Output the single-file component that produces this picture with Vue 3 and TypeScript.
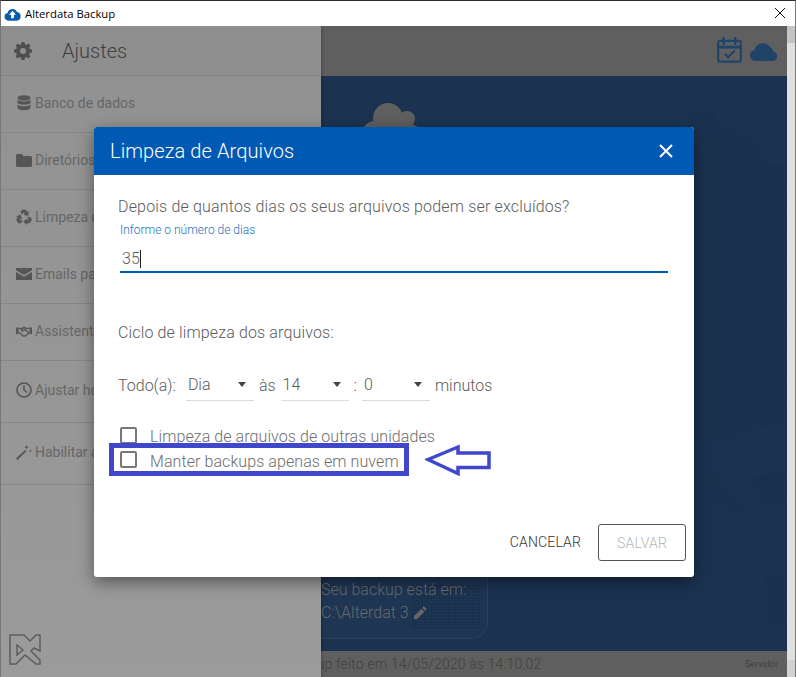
<script setup lang="ts">
const menu = [
  { label: 'Banco de dados', icon: 'db', cls: 'h57' },
  { label: 'Diretórios de backup', icon: 'folder', cls: 'h57' },
  { label: 'Limpeza de arquivos', icon: 'recycle', cls: 'h57' },
  { label: 'Emails para notificação', icon: 'mail', cls: 'h57' },
  { label: 'Assistente de instalação', icon: 'hands', cls: 'h57' },
  { label: 'Ajustar horário', icon: 'clock', cls: 'h62' },
  { label: 'Habilitar assistente', icon: 'wand', cls: 'h62' }
]

const selects = [
  { value: 'Dia' },
  { value: '14' },
  { value: '0' }
]
</script>

<template>
  <div class="window">
    <header class="titlebar">
      <svg class="app-icon" viewBox="0 0 24 20" width="17" height="14">
        <path fill="#0b5cad" d="M6 19.5a5.5 5.5 0 0 1-.9-10.900A7 7 0 0 1 18.400 7.200 6.200 6.200 0 0 1 18 19.500z" />
        <path fill="#fff" d="M12 5.500l5 5.500h-3v5h-4v-5H7z" />
      </svg>
      <span class="app-name">Alterdata Backup</span>
      <svg class="win-close" viewBox="0 0 10 10" width="10" height="10">
        <path d="M0 0l10 10M10 0L0 10" stroke="#111" stroke-width="1" fill="none" />
      </svg>
    </header>

    <div class="content">
      <main class="main">
        <div class="topbar">
          <svg class="cal" viewBox="0 0 26 27" width="25" height="26">
            <rect x="1.200" y="4" width="23.600" height="21.600" rx="2" fill="none" stroke="#1f4468" stroke-width="2.200" />
            <path d="M1 10.500h24" stroke="#1f4468" stroke-width="3" />
            <path d="M7 1v6M19 1v6" stroke="#1f4468" stroke-width="2.600" stroke-linecap="round" />
            <path d="M8 17.500l3.500 3.500 7-7" fill="none" stroke="#1f4468" stroke-width="2.200" />
          </svg>
          <svg class="cloud-small" viewBox="0 0 28 21" width="28" height="21">
            <path fill="#1f4468" d="M5.500 21a5.500 5.500 0 0 1-1-10.900A8.500 8.500 0 0 1 19.800 6.900 5 5 0 0 1 23 11.500a4.800 4.800 0 0 1 0 9.500z" />
          </svg>
        </div>

        <div class="stage">
          <svg class="big-cloud" viewBox="0 0 80 50" width="80" height="50">
            <g fill="#5f5f5f">
              <circle cx="34" cy="16" r="15" />
              <circle cx="53" cy="17" r="8" />
              <circle cx="21" cy="32" r="13" />
              <circle cx="55" cy="35" r="13" />
              <rect x="20" y="20" width="36" height="30" />
            </g>
          </svg>
          <div class="dots dots-a"></div>
          <div class="dots dots-b"></div>
          <div class="dots dots-c"></div>
          <div class="dots dots-e"></div>
          <div class="backup-card">
            <div class="dots dots-d"></div>
            <p>Seu backup está em:</p>
            <p>C:\Alterdat 3
              <svg viewBox="0 0 16 16" width="15" height="15" class="pencil">
                <path fill="#666" d="M11.600 1.200l3.200 3.200-1.800 1.800-3.200-3.200zM8.900 3.900l3.200 3.200-7.700 7.700L.8 15.200l.4-3.600z" />
              </svg>
            </p>
          </div>
        </div>

        <footer class="statusbar">
          <span class="last">Último backup feito em 14/05/2020 às 14:10:02</span>
          <span class="server">Servidor</span>
        </footer>
      </main>

      <aside class="drawer">
        <div class="drawer-head">
          <svg viewBox="0 0 24 24" width="18" height="18" class="gear">
            <path fill="#4f4f4f" fill-rule="evenodd" d="M10 1h4l.6 3.100 1.900.8L19.100 3 22 5.900l-1.900 2.600.8 1.900L24 11v4l-3.100.6-.8 1.900 1.900 2.600L19.100 23l-2.600-1.900-1.900.8L14 25h-4l-.6-3.100-1.900-.8L4.900 23 2 20.100l1.900-2.600-.8-1.900L0 15v-4l3.100-.6.8-1.900L2 5.900 4.900 3l2.600 1.900 1.900-.8zM12 9a4 4 0 1 0 0 8 4 4 0 0 0 0-8z" transform="translate(0 -1)" />
          </svg>
          <span class="drawer-title">Ajustes</span>
        </div>
        <div v-for="item in menu" :key="item.label" class="menu-row" :class="item.cls">
          <svg viewBox="0 0 16 16" width="16" height="16" class="menu-icon">
            <g v-if="item.icon === 'db'" fill="#555">
              <ellipse cx="8" cy="3" rx="6.500" ry="2.700" />
              <path d="M1.500 4.800C3 7 13 7 14.500 4.800V8C13 10.200 3 10.200 1.500 8zM1.500 9.600C3 11.800 13 11.800 14.500 9.600V13c-1.500 3-11.500 3-13 0z" />
            </g>
            <path v-else-if="item.icon === 'folder'" fill="#555" d="M0 3.500A1.500 1.500 0 0 1 1.500 2h4.300l1.700 2h7A1.500 1.500 0 0 1 16 5.500v8a1.500 1.500 0 0 1-1.500 1.500h-13A1.500 1.500 0 0 1 0 13.500z" />
            <g v-else-if="item.icon === 'recycle'" fill="#555" stroke="#555" stroke-width=".8">
              <path d="M5 2.600L6.300 1h3.400l1.500 2.500 1.300-.8-.7 3.800-3.700-.9 1.200-.7L7.900 3.300a.4.400 0 0 0-.7 0L6 5.400z" />
              <path d="M5 2.600L6.300 1h3.400l1.500 2.500 1.300-.8-.7 3.800-3.700-.9 1.200-.7L7.900 3.300a.4.400 0 0 0-.7 0L6 5.400z" transform="rotate(120 8 8.500)" />
              <path d="M5 2.600L6.300 1h3.400l1.500 2.500 1.300-.8-.7 3.800-3.700-.9 1.200-.7L7.900 3.300a.4.400 0 0 0-.7 0L6 5.400z" transform="rotate(240 8 8.500)" />
            </g>
            <path v-else-if="item.icon === 'mail'" fill="#555" d="M0 2h16v2.300L8 9 0 4.300zM0 6l8 4.700L16 6v8H0z" />
            <g v-else-if="item.icon === 'hands'">
              <path fill="#555" d="M0 4.500h2.500v6.500H0zM13.500 4.500H16v6.500h-2.500z" />
              <path fill="none" stroke="#555" stroke-width="1.300" d="M2.500 5.500H6L8 4.300l2 1h3.500M2.500 10h1.500l3 3h2l4.500-3M8 4.300L5.500 7c1 1.200 2.500 1 3.500-.5l4 3.500" />
            </g>
            <g v-else-if="item.icon === 'clock'" fill="none" stroke="#555" stroke-width="1.600">
              <circle cx="8" cy="8" r="7" />
              <path d="M8 3.500V8l3 2.500" />
            </g>
            <g v-else fill="#555">
              <path d="M0 14.500L9 6l1.300 1.300L1.500 16z" />
              <path d="M10.500 1l.6 1.600 1.600.6-1.600.6-.6 1.600-.6-1.600-1.600-.6 1.600-.6zM14.500 5.500l.4 1.100 1.100.4-1.100.4-.4 1.100-.4-1.100L13 7l1.100-.4z" />
            </g>
          </svg>
          <span class="menu-label">{{ item.label }}</span>
        </div>
        <svg class="logo" viewBox="0 0 32 32" width="32" height="32">
          <path fill="none" stroke="#5d5d5d" stroke-width="1.500" d="M1 1h14l6 6 6-6h4v16l-6-3-3 3 9 9v4h-4L16 21l-9 9H1zM8 11l6 5-6 5z" />
        </svg>
      </aside>

      <section class="dialog">
        <div class="dialog-head">
          <h2>Limpeza de Arquivos</h2>
          <svg viewBox="0 0 14 14" width="14" height="14">
            <path d="M1 1l12 12M13 1L1 13" stroke="#fff" stroke-width="2" fill="none" />
          </svg>
        </div>
        <div class="dialog-body">
          <p class="question">Depois de quantos dias os seus arquivos podem ser excluídos?</p>
          <div class="field">
            <label>Informe o número de dias</label>
            <div class="input"><span>35</span><i class="caret"></i></div>
          </div>
          <p class="cycle">Ciclo de limpeza dos arquivos:</p>
          <div class="schedule">
            <span class="lead">Todo(a):</span>
            <div class="select"><span>{{ selects[0].value }}</span><b></b></div>
            <span class="at">às</span>
            <div class="select"><span>{{ selects[1].value }}</span><b></b></div>
            <span class="colon">:</span>
            <div class="select"><span>{{ selects[2].value }}</span><b></b></div>
            <span class="unit">minutos</span>
          </div>
          <div class="checks">
            <label class="check"><i class="box"></i>Limpeza de arquivos de outras unidades</label>
            <label class="check second"><i class="box"></i>Manter backups apenas em nuvem</label>
            <div class="highlight"></div>
            <svg class="arrow" viewBox="0 0 66 32" width="66" height="32">
              <path d="M3 15.500L33 3v6h31v14.500H33v6z" fill="none" stroke="#3f48cc" stroke-width="3.500" />
            </svg>
          </div>
        </div>
        <div class="dialog-actions">
          <button class="cancel">CANCELAR</button>
          <button class="save">SALVAR</button>
        </div>
      </section>
    </div>
    <div class="scrollbar"></div>
    <div class="scrollbar-end"></div>
  </div>
</template>

<style scoped>
.window {
  position: relative;
  width: 796px;
  height: 677px;
  overflow: hidden;
  display: flex;
  flex-direction: column;
  background: #e0e0e0;
  font-family: Roboto, "Liberation Sans", sans-serif;
  box-sizing: border-box;
  border-top: 1px solid #2b2b2b;
  border-left: 1px solid #777;
  border-right: 1px solid #777;
}
.titlebar {
  height: 25px;
  flex: none;
  background: #fff;
  display: flex;
  align-items: center;
  padding-left: 3px;
  position: relative;
  font-family: "Open Sans", "Noto Sans", sans-serif;
}
.app-name {
  margin-left: 4px;
  font-size: 11.300px;
  color: #000;
}
.win-close {
  position: absolute;
  left: 774px;
  top: 7px;
}
.content {
  position: relative;
  flex: 1;
  width: 786px;
  overflow: hidden;
}
.main {
  height: 100%;
  display: flex;
  flex-direction: column;
}
.topbar {
  height: 50px;
  flex: none;
  background: #5f5f5f;
  display: flex;
  justify-content: flex-end;
  align-items: center;
  gap: 8px;
  padding: 0 9px 2px 0;
  box-sizing: border-box;
}
.stage {
  flex: 1;
  position: relative;
  background: #1b3350;
}
.big-cloud {
  position: absolute;
  left: 353px;
  top: 26px;
}
.dots {
  position: absolute;
  background-image: radial-gradient(circle at 1px 1px, #19304c 1px, transparent 1.200px);
  background-size: 3px 3px;
}
.dots-a {
  inset: 0;
  clip-path: polygon(688px 29px, 707px 30px, 719px 46px, 759px 67px, 761px 87px, 786px 89px, 786px 349px, 749px 354px, 734px 364px, 693px 364px);
}
.dots-b {
  inset: 0;
  clip-path: polygon(699px 394px, 719px 394px, 734px 424px, 744px 434px, 734px 444px, 719px 429px, 704px 414px);
}
.dots-c {
  inset: 0;
  clip-path: polygon(749px 402px, 784px 394px, 786px 429px, 759px 429px);
}
.dots-e {
  inset: 0;
  clip-path: polygon(764px 494px, 786px 494px, 786px 549px, 769px 549px);
}
.backup-card {
  position: absolute;
  left: 240px;
  top: 420px;
  width: 247px;
  height: 143px;
  box-sizing: border-box;
  padding: 81px 0 0 79px;
  background: #1e3653;
  border: 1px solid #2a4260;
  border-radius: 16px;
  color: #6a6a6a;
  font-size: 16px;
  font-weight: 300;
  line-height: 23px;
}
.backup-card p {
  margin: 0;
  position: relative;
  white-space: nowrap;
}
.dots-d {
  left: 170px;
  top: 88px;
  width: 70px;
  height: 45px;
}
.pencil {
  vertical-align: -2px;
}
.statusbar {
  height: 26px;
  flex: none;
  background: #5f5f5f;
  display: flex;
  justify-content: space-between;
  align-items: center;
  padding-right: 9px;
  box-sizing: border-box;
  color: #3f3f3f;
}
.last {
  margin-left: 241px;
  font-size: 14px;
  font-weight: 300;
  letter-spacing: .15px;
}
.server {
  font-size: 9px;
}
.drawer {
  position: absolute;
  left: 0;
  top: 0;
  bottom: 0;
  width: 320px;
  background: linear-gradient(#919191, #9b9b9b);
  color: #666;
  box-shadow: 1px 0 3px rgba(0, 0, 0, .25);
}
.drawer-head {
  height: 50px;
  display: flex;
  align-items: center;
  background: #8f8f8f;
  border-bottom: 1px solid #858585;
  box-sizing: border-box;
}
.gear {
  margin-left: 13px;
}
.drawer-title {
  margin-left: 30px;
  font-size: 20px;
  font-weight: 300;
  color: #3f3f3f;
}
.menu-row {
  display: flex;
  align-items: center;
  box-sizing: border-box;
  border-bottom: 1px solid #868686;
  padding-left: 15px;
  font-size: 14px;
}
.h57 {
  height: 57px;
  padding-bottom: 2px;
}
.h62 {
  height: 62px;
  padding-bottom: 3px;
}
.menu-label {
  margin-left: 3px;
  white-space: nowrap;
}
.logo {
  position: absolute;
  left: 8px;
  bottom: 11px;
}
.dialog {
  position: absolute;
  left: 93px;
  top: 101px;
  width: 600px;
  height: 450px;
  background: #fff;
  border-radius: 3px;
  display: flex;
  flex-direction: column;
  box-shadow: 0 5px 16px rgba(0, 0, 0, .45);
}
.dialog-head {
  height: 48px;
  flex: none;
  background: #0059b3;
  border-radius: 3px 3px 0 0;
  display: flex;
  align-items: center;
  justify-content: space-between;
  padding: 0 21px 0 16px;
}
.dialog-head h2 {
  margin: 0;
  font-size: 20px;
  font-weight: 300;
  letter-spacing: .1px;
  color: #fff;
}
.dialog-body {
  flex: 1;
  padding: 22px 26px 0 24px;
  color: #5b5b5b;
  font-size: 16px;
  font-weight: 300;
}
.question {
  margin: 0;
  line-height: 20px;
  letter-spacing: .17px;
}
.field {
  margin: 6px 0 0 2px;
}
.field label {
  display: block;
  font-size: 12px;
  line-height: 14px;
  color: #1a72c4;
}
.input {
  margin-top: 6px;
  height: 30px;
  border-bottom: 2px solid #0059b3;
  display: flex;
  align-items: center;
  padding: 3px 0 0 2px;
  box-sizing: border-box;
}
.caret {
  width: 1px;
  height: 18px;
  background: #222;
}
.cycle {
  margin: 50px 0 0;
  line-height: 20px;
  letter-spacing: .14px;
}
.schedule {
  display: flex;
  align-items: center;
  margin-top: 26px;
  height: 32px;
}
.select {
  width: 68px;
  height: 32px;
  border-bottom: 1px solid #ddd;
  box-sizing: border-box;
  display: flex;
  justify-content: space-between;
  align-items: center;
  padding: 0 8px 0 2px;
}
.select b {
  border-left: 4.500px solid transparent;
  border-right: 4.500px solid transparent;
  border-top: 5px solid #444;
}
.lead { margin-right: 10px; }
.at { margin: 0 5px; }
.colon { margin: 0 5px; }
.unit { margin-left: 5px; }
.checks {
  position: relative;
  margin-top: 23px;
  letter-spacing: .08px;
}
.check {
  display: flex;
  align-items: center;
  height: 25px;
  color: #6d6d6d;
}
.box {
  width: 13px;
  height: 13px;
  border: 2px solid #777;
  border-radius: 2px;
  margin: -2px 13px 0 2px;
  flex: none;
}
.second .box {
  margin-top: -4px;
}
.highlight {
  position: absolute;
  left: -9px;
  top: 19px;
  width: 300px;
  height: 33px;
  border: 5px solid #3f48cc;
  box-sizing: border-box;
}
.arrow {
  position: absolute;
  left: 307px;
  top: 20px;
}
.dialog-actions {
  display: flex;
  justify-content: flex-end;
  align-items: center;
  gap: 17px;
  padding: 0 8px 16px 0;
}
.dialog-actions button {
  font-family: inherit;
  font-size: 14px;
  font-weight: 300;
  background: none;
  letter-spacing: .15px;
  padding: 0;
}
.cancel {
  border: 0;
  color: #333;
  margin-bottom: 2px;
}
.save {
  width: 88px;
  height: 37px;
  border: 1px solid #555;
  border-radius: 3px;
  color: #b5b5b5;
}
.scrollbar {
  position: absolute;
  right: 0;
  top: 25px;
  width: 8px;
  height: 17px;
  background: #c4c4c4;
}
.scrollbar-end {
  position: absolute;
  right: 0;
  bottom: 0;
  width: 8px;
  height: 17px;
  background: #d2d2d2;
}
</style>
